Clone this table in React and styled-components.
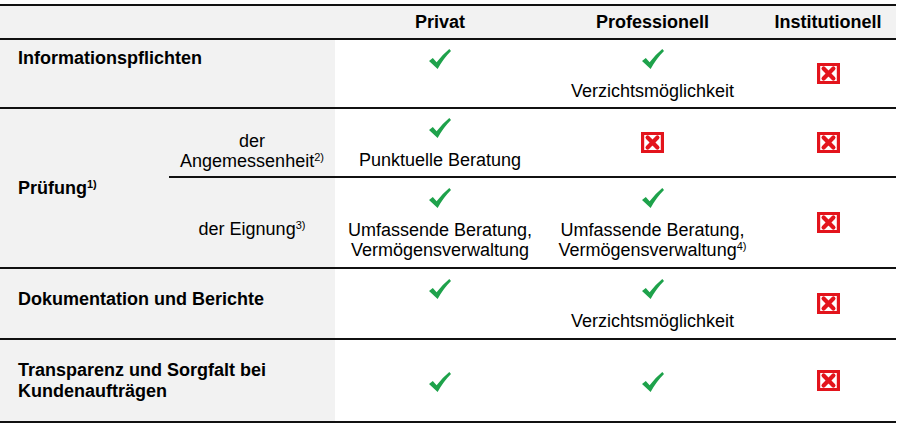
import React from "react";
import styled, { createGlobalStyle } from "styled-components";

const Global = createGlobalStyle`
  html, body { margin: 0; padding: 0; background: #fff; }
  body { font-family: "Liberation Sans", Arial, sans-serif; color: #000; }
`;

const COLS = "169px 166px 210px 215px 136px";
const GRAY = "#f2f2f2";
const LINE = "2px solid #111";

const Page = styled.div`
  padding-top: 4px;
  width: 896px;
`;

const Table = styled.div`
  border-top: ${LINE};
`;

const Row = styled.div`
  display: grid;
  grid-template-columns: ${COLS};
  grid-template-rows: ${(p) => p.$rows || "auto"};
  height: ${(p) => p.$h}px;
  border-bottom: ${LINE};
  background: ${(p) => (p.$head ? GRAY : "#fff")};
`;

const SubRow = styled.div`
  grid-column: 2 / 6;
  display: grid;
  grid-template-columns: 166px 210px 215px 136px;
  border-top: ${(p) => (p.$divided ? LINE : "none")};
`;

const Label = styled.div`
  grid-column: ${(p) => p.$span || "1 / 3"};
  grid-row: ${(p) => p.$rowSpan || "auto"};
  background: ${GRAY};
  display: flex;
  align-items: ${(p) => (p.$top ? "flex-start" : "center")};
  padding: ${(p) => p.$pt || 0}px 18px ${(p) => p.$pb || 0}px;
  font-weight: bold;
  font-size: 18px;
  line-height: 21px;
`;

const SubLabel = styled.div`
  background: ${GRAY};
  text-align: center;
  padding-top: ${(p) => p.$pt}px;
  font-size: 18px;
  line-height: 20px;
`;

const HeadCell = styled.div`
  display: flex;
  align-items: center;
  justify-content: center;
  font-weight: bold;
  font-size: 18px;
`;

const Cell = styled.div`
  display: flex;
  flex-direction: column;
  align-items: center;
  justify-content: center;
  gap: 12px;
  padding-top: ${(p) => p.$pt || 0}px;
  text-align: center;
  font-size: 18px;
  line-height: 20px;
`;

const Note = styled.div`
  min-height: 20px;
`;

const Sup = styled.sup`
  font-size: 11px;
  line-height: 0;
  vertical-align: 6px;
  font-weight: inherit;
`;

const Check = () => (
  <svg width="22" height="20" viewBox="0 0 22 20" aria-hidden="true">
    <path
      d="M0 12 L3.8 9 L7.6 13.2 Q13 6 20.3 0 L22 1.9 Q14.2 9.6 8.6 20 Z"
      fill="#1ea24b"
    />
  </svg>
);

const Cross = () => (
  <svg width="23" height="21" viewBox="0 0 23 21" aria-hidden="true">
    <rect width="23" height="21" fill="#e3141c" />
    <rect x="3.2" y="3" width="16.6" height="15" fill="#fff" />
    <path
      d="M6.6 5.6 L16.4 15.4 M16.4 5.6 L6.6 15.4"
      stroke="#e3141c"
      strokeWidth="4.2"
      strokeLinecap="round"
    />
  </svg>
);

const Yes = ({ children, reserve }) => (
  <Cell $pt={3}>
    <Check />
    {(children || reserve) && <Note>{children}</Note>}
  </Cell>
);

const No = () => (
  <Cell>
    <Cross />
  </Cell>
);

export default function App() {
  return (
    <>
      <Global />
      <Page>
        <Table>
          <Row $head $h={32}>
            <Label />
            <HeadCell>Privat</HeadCell>
            <HeadCell>Professionell</HeadCell>
            <HeadCell>Institutionell</HeadCell>
          </Row>

          <Row $h={67}>
            <Label $top $pt={8}>Informationspflichten</Label>
            <Yes reserve />
            <Yes>Verzichtsmöglichkeit</Yes>
            <No />
          </Row>

          <Row $h={158} $rows="67px 91px">
            <Label $span="1" $rowSpan="1 / 3">
              <span>
                Prüfung<Sup>1)</Sup>
              </span>
            </Label>
            <SubRow>
              <SubLabel $pt={22}>
                der
                <br />
                Angemessenheit<Sup>2)</Sup>
              </SubLabel>
              <Yes>Punktuelle Beratung</Yes>
              <No />
              <No />
            </SubRow>
            <SubRow $divided>
              <SubLabel $pt={41}>
                der Eignung<Sup>3)</Sup>
              </SubLabel>
              <Yes>
                Umfassende Beratung,
                <br />
                Vermögensverwaltung
              </Yes>
              <Yes>
                Umfassende Beratung,
                <br />
                Vermögensverwaltung<Sup>4)</Sup>
              </Yes>
              <No />
            </SubRow>
          </Row>

          <Row $h={69}>
            <Label $pb={9}>Dokumentation und Berichte</Label>
            <Yes reserve />
            <Yes>Verzichtsmöglichkeit</Yes>
            <No />
          </Row>

          <Row $h={81}>
            <Label>
              Transparenz und Sorgfalt bei
              <br />
              Kundenaufträgen
            </Label>
            <Yes />
            <Yes />
            <No />
          </Row>
        </Table>
      </Page>
    </>
  );
}
